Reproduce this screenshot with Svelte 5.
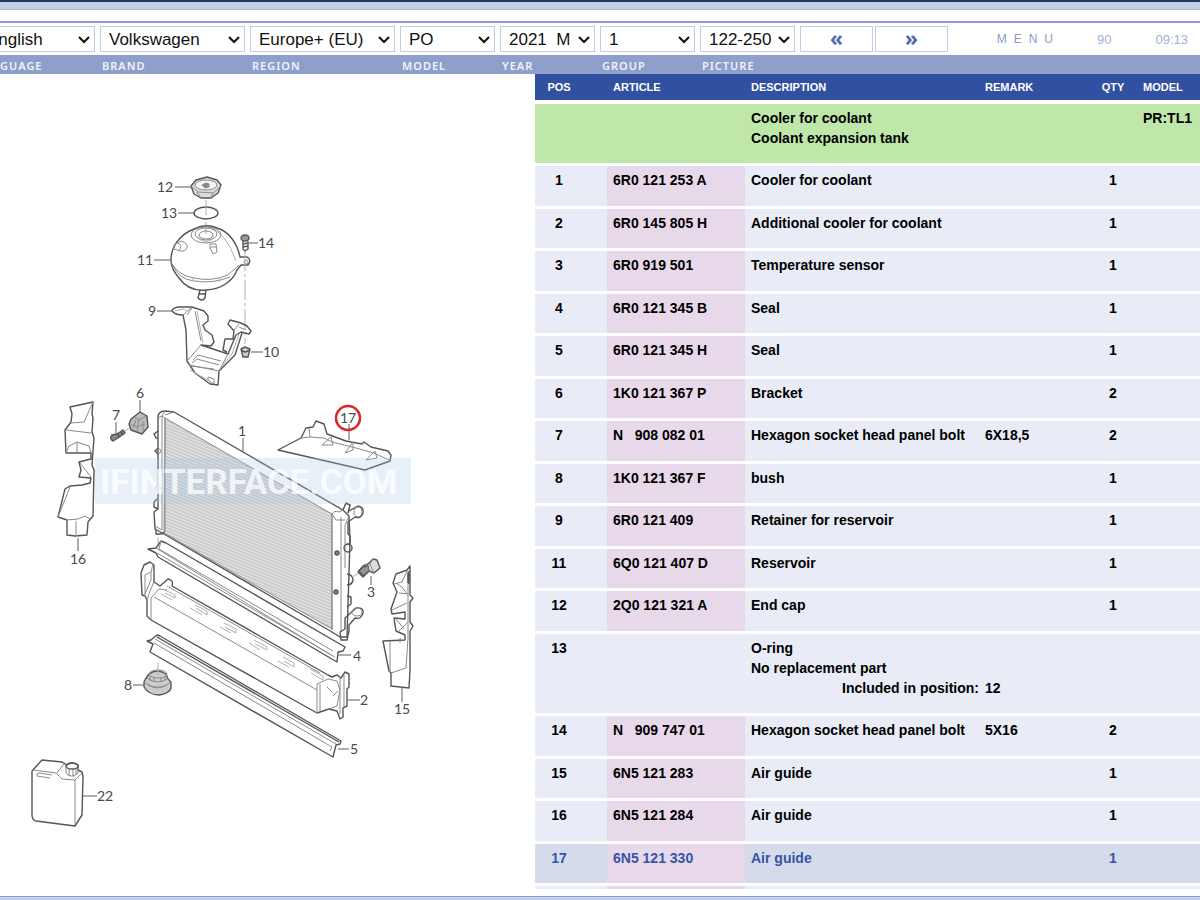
<script lang="ts">
    type Part = {
        pos: string;
        article: string;
        lines: string[];
        included?: string;
        remark?: string;
        qty: string;
        model?: string;
        group?: boolean;
    };

    const filters = [
        { id: 'language', label: 'LANGUAGE', value: 'English' },
        { id: 'brand', label: 'BRAND', value: 'Volkswagen' },
        { id: 'region', label: 'REGION', value: 'Europe+ (EU)' },
        { id: 'model', label: 'MODEL', value: 'PO' },
        { id: 'year', label: 'YEAR', value: '2021\u00a0\u00a0M' },
        { id: 'group', label: 'GROUP', value: '1' },
        { id: 'picture', label: 'PICTURE', value: '122-250' },
    ];

    const parts: Part[] = [
        { pos: '', article: '', lines: ['Cooler for coolant', 'Coolant expansion tank'], qty: '', model: 'PR:TL1', group: true },
        { pos: '1', article: '6R0 121 253 A', lines: ['Cooler for coolant'], qty: '1' },
        { pos: '2', article: '6R0 145 805 H', lines: ['Additional cooler for coolant'], qty: '1' },
        { pos: '3', article: '6R0 919 501', lines: ['Temperature sensor'], qty: '1' },
        { pos: '4', article: '6R0 121 345 B', lines: ['Seal'], qty: '1' },
        { pos: '5', article: '6R0 121 345 H', lines: ['Seal'], qty: '1' },
        { pos: '6', article: '1K0 121 367 P', lines: ['Bracket'], qty: '2' },
        { pos: '7', article: 'N   908 082 01', lines: ['Hexagon socket head panel bolt'], remark: '6X18,5', qty: '2' },
        { pos: '8', article: '1K0 121 367 F', lines: ['bush'], qty: '1' },
        { pos: '9', article: '6R0 121 409', lines: ['Retainer for reservoir'], qty: '1' },
        { pos: '11', article: '6Q0 121 407 D', lines: ['Reservoir'], qty: '1' },
        { pos: '12', article: '2Q0 121 321 A', lines: ['End cap'], qty: '1' },
        { pos: '13', article: '', lines: ['O-ring', 'No replacement part'], included: 'Included in position:', remark: '\n\n12', qty: '' },
        { pos: '14', article: 'N   909 747 01', lines: ['Hexagon socket head panel bolt'], remark: '5X16', qty: '2' },
        { pos: '15', article: '6N5 121 283', lines: ['Air guide'], qty: '1' },
        { pos: '16', article: '6N5 121 284', lines: ['Air guide'], qty: '1' },
        { pos: '17', article: '6N5 121 330', lines: ['Air guide'], qty: '1' },
        { pos: '', article: '\u00a0', lines: [], qty: '' },
    ];

    // centre of each number and its leader line
    const callouts = [
        { n: '12', x: 165, y: 187, d: 'M175 187H191' },
        { n: '13', x: 169, y: 213, d: 'M178 213H194' },
        { n: '14', x: 266, y: 243, d: 'M249 243H258' },
        { n: '11', x: 145, y: 260, d: 'M154 260H171' },
        { n: '9', x: 152, y: 311, d: 'M157 311H172' },
        { n: '10', x: 271, y: 352, d: 'M251 352H263' },
        { n: '6', x: 140, y: 393, d: 'M140 400V412' },
        { n: '7', x: 116, y: 415, d: 'M116 422V434' },
        { n: '1', x: 242, y: 431, d: 'M243 438V451' },
        { n: '17', x: 348, y: 418, d: 'M349 424V440' },
        { n: '16', x: 78, y: 559, d: 'M78 538V551' },
        { n: '3', x: 371, y: 592, d: 'M371 576V585' },
        { n: '4', x: 357, y: 656, d: 'M337 655H351' },
        { n: '8', x: 128, y: 685, d: 'M133 685H144' },
        { n: '2', x: 364, y: 700, d: 'M348 700H360' },
        { n: '15', x: 402, y: 709, d: 'M402 688V702' },
        { n: '5', x: 354, y: 749, d: 'M338 749H349' },
        { n: '22', x: 105, y: 796, d: 'M83 796H97' },
    ];

    let selected = $state('17');
</script>

<div class="page">
    <div class="strip"></div>

    <header>
        {#each filters as filter}
            <div class="filter">
                <select id={filter.id}>
                    <option>{filter.value}</option>
                </select>
                <svg class="chevron" viewBox="0 0 12 8" aria-hidden="true">
                    <path d="M1 1L6 6L11 1" />
                </svg>
                <label for={filter.id}>{filter.label}</label>
            </div>
        {/each}
        <div class="tools">
            <div class="controls">
                <button class="step" aria-label="Previous picture">«</button>
                <button class="step" aria-label="Next picture">»</button>
                <div class="status">
                    <button class="menu">MENU</button>
                    <span>90</span>
                    <time>09:13</time>
                </div>
            </div>
            <div class="rest"></div>
        </div>
    </header>

    <main>
        <div class="drawing">
            <svg viewBox="0 74 535 815" role="img" aria-label="Cooler for coolant, coolant expansion tank">
                <defs>
                    <pattern id="fins" width="3" height="3" patternUnits="userSpaceOnUse" patternTransform="rotate(22)">
                        <rect width="3" height="3" fill="#e6e6e6" />
                        <path d="M0 1H3" stroke="#b0b0b0" />
                    </pattern>
                </defs>

                <g class="line">
                    <!-- cap and ring -->
                    <path class="heavy" d="M191 186L196 180L207 177L217 180L221 185L218 193L211 198H201L194 194Z" fill="#ddd" />
                    <path d="M191 186L198 192L213 193L221 186" />
                    <ellipse cx="206" cy="185" rx="11" ry="5" fill="#f4f4f4" />
                    <path d="M197 192L201 198M213 193L211 198M202 185L206 183L209 184V187L205 188Z" fill="#888" />
                    <ellipse class="heavy" cx="206" cy="213" rx="12" ry="6" />
                    <path class="thin" d="M206 200V215M206 222V234" />

                    <!-- expansion tank -->
                    <path class="heavy" d="M194 229C179 235 171 247 171 260C171 268 175 273 179 278C186 288 196 291 206 290C222 289 233 281 237 270L241 265H248Q252 260 247 257L240 257C237 242 228 231 217 228Q206 223 194 229Z" />
                    <path d="M171 262Q177 275 194 278Q211 282 228 275L239 265M173 265Q178 279 194 281Q212 284 230 277" />
                    <path class="thin" d="M193 278V281M219 278V282M211 228Q226 233 236 261" />
                    <ellipse cx="206" cy="235" rx="15" ry="8" />
                    <ellipse cx="206" cy="234" rx="11" ry="6" />
                    <ellipse cx="206" cy="235" rx="7" ry="4" />
                    <path class="thin" d="M199 235V239Q206 244 213 239V235" />
                    <path d="M174 245L181 241Q188 243 187 248Q184 253 177 250L174 249ZM178 243Q183 246 179 251" />
                    <path d="M210 244H216L217 252L213 254L210 248ZM211 247H216" />
                    <path class="heavy" d="M200 290L198 298Q202 302 205 298L206 290M199 294H205" />
                    <circle cx="246" cy="262" r="2" />

                    <!-- screw and nut -->
                    <ellipse class="heavy" cx="245" cy="238" rx="4" ry="3" fill="#999" />
                    <path class="heavy" d="M243 241V249L245 251L248 249V241M243 244L248 243M243 247L248 246" />
                    <path class="thin" d="M245 251V344" stroke-dasharray="20 3 3 3" />
                    <path class="heavy" d="M241 349L245 347L250 349L248 357H243ZM241 350L245 352L250 350" fill="#ccc" />

                    <!-- retainer -->
                    <path class="heavy" d="M172 311Q173 307 180 307L192 307L204 311L208 316V321L203 325L205 330L212 335L214 342L211 346L201 345L228 354L236 335L241 332L249 334L251 331L247 326L241 323L230 320L228 324L234 331L233 339H225L223 350L227 352" />
                    <path class="heavy" d="M172 311Q175 315 183 315L186 330L187 361L195 373L210 384L218 385L219 371L235 355L242 333" />
                    <path d="M183 315L192 307M187 361L201 345M189 365L219 371L228 354M192 308L187 315M195 311L201 341M193 360L198 355L221 361M192 363L197 359L219 365M191 366L214 369M208 377L214 379V384L208 380ZM239 327L246 330M234 330L239 324" />
                    <path class="thin" d="M197 311L203 343M190 370L211 382M175 311L183 309L187 311M221 367L232 354L239 334" />

                    <!-- air guide 16 -->
                    <path class="heavy" d="M93 402L70 407L72 414L71 422L65 430L66 453L91 453V459L79 462L81 470L79 477L91 478L90 483L82 485L70 486L65 489L58 517L67 520V535L75 536L87 535L88 522L93 516L94 470L92 465L94 438L92 432L93 418L92 414Z" />
                    <path d="M93 402L84 422L71 423M66 430L91 433M66 453L69 446L77 442L89 446L91 453M80 463L91 477M58 517L70 487M66 520L78 519L85 516L90 519M76 521V536M77 442V453" />

                    <!-- bracket 6, bolt 7 -->
                    <path class="heavy" d="M131 419L140 412L147 416L148 427L142 434L131 430L129 424Z" fill="#bbb" />
                    <path d="M134 417L139 420L146 416M139 420L137 432M131 424L137 427L145 424M143 421V431M136 420L133 428" />
                    <path class="heavy" d="M112 435Q109 439 113 441L118 438L125 433L123 430L117 434ZM118 434L119 437M121 432L123 435" fill="#888" />
                    <path class="thin" d="M125 431L130 428" />

                    <!-- radiator -->
                    <path class="heavy" d="M158 418Q158 411 165 411L174 412L343 510L349 516L350 540L347 637H340L332 632L164 534L155 529L154 512L158 509Z" />
                    <path d="M165 418L332 514V629L164 533Z" fill="url(#fins)" />
                    <path d="M158 418L162 416L165 418V532M162 416V530L155 526M165 411L162 416M165 415L174 412" />
                    <path d="M332 514Q334 510 339 512L343 510M332 514V630M341 517V631M332 514L336 520H345M349 516L345 525V568M343 510L346 503L350 505L348 513" />
                    <path class="heavy" d="M343 510L346 503L350 505L348 513M349 511L358 506Q364 507 363 513Q361 519 355 517L348 522V534L350 536V543L347 545" />
                    <ellipse cx="358" cy="512" rx="4" ry="5" />
                    <circle class="heavy" cx="348" cy="548" r="4" />
                    <circle class="heavy" cx="337" cy="553" r="2" fill="#888" />
                    <circle class="heavy" cx="336" cy="592" r="2" fill="#888" />
                    <path class="heavy" d="M347 574Q353 575 353 580Q352 585 347 585M347 596L351 597V604L347 607" />
                    <path class="heavy" d="M345 618L356 608Q364 607 363 613Q361 620 355 618L349 625V631L347 640H341L340 632L345 629Z" />
                    <ellipse cx="357" cy="612" rx="5" ry="4" />
                    <path class="heavy" d="M158 431L154 434L156 438H158M158 448L155 451L158 454M158 485L155 488L158 491M157 499L154 502V507L158 509M156 530V534H162L164 532" />
                    <circle cx="159" cy="451" r="2" />
                    <circle cx="159" cy="488" r="2" />
                    <path class="thin" d="M158 537V544" />

                    <!-- sensor 3 -->
                    <path class="heavy" d="M358 572L363 566L368 564L373 559L377 560L380 568L374 573L369 571L363 577Z" fill="#ddd" />
                    <path class="heavy" d="M359 571L363 567L368 566L369 571L363 576Z" fill="#999" />
                    <path d="M363 566L366 573M366 564L370 572M373 559L370 564L374 573" />
                    <path class="thin" d="M352 577L359 573" />

                    <!-- seal 4 -->
                    <path class="heavy" d="M148 549L156 548L161 541L166 543L345 647L343 651L338 652L337 662L158 557L156 553Z" />
                    <path d="M161 541L159 549L333 651M156 548L331 655M157 553L335 657" />

                    <!-- additional cooler 2 -->
                    <path class="heavy" d="M147 600L145 596L142 595L141 573L144 565L150 562L154 565V582L160 586L168 579Q174 580 172 586L328 675L332 677L337 675L341 678L345 672L349 674V687L347 689V706L343 708V717L340 719L337 711L329 709L317 713L151 620L147 616Z" />
                    <path d="M153 564L151 572L145 575V597M151 572V580L145 594M154 582L150 591L147 600M151 620V598L159 589L167 590M167 586L320 673M154 597L317 690M317 713V684L328 679L337 681L340 690L337 706L329 709M320 684V711M340 677V714M344 675V708M327 687L332 692M333 696L338 691" />
                    <path class="thin" d="M163 589L175 595V598L165 593M195 605L207 611V615L196 608M224 623L236 629V633L225 627M254 640L267 647V650L255 644M283 657L294 663V667L284 661M310 669L323 676V680L311 673" />
                    <path class="thin" d="M161 594L172 600M190 608L202 615M220 627L231 633M249 643L260 650M278 661L289 667" />

                    <!-- seal 5 -->
                    <path class="heavy" d="M147 641L151 640L157 635L160 636L341 741L340 744L336 745L333 757L150 652L153 644Z" />
                    <path class="heavy" d="M157 637L339 742" />
                    <path d="M155 639L336 744M154 643L332 747L330 751" />

                    <!-- bush 8 -->
                    <path class="heavy" d="M146 678L144 682V687Q149 695 159 695Q169 694 171 688V682L168 679L166 674Q157 668 149 674Z" fill="#ccc" />
                    <ellipse cx="158" cy="674" rx="9" ry="4" />
                    <path d="M147 678Q158 686 168 678M144 682Q157 694 171 682M147 684Q157 690 167 685M150 676V681M165 676V681M154 678V682M161 678V682" />
                    <path class="thin" d="M158 663V675" />

                    <!-- air guide 15 -->
                    <path class="heavy" d="M410 566L407 570L396 574L393 583L397 592L391 609L392 614L405 612V619L394 618L396 631L405 635V640L383 641L389 671L391 673V686L409 688L410 670V631L413 626L410 622V602L413 598L410 595Z" />
                    <path d="M408 571V638L406 668L391 673M394 584L402 582L407 571M396 583L402 587L407 594M399 593L408 594M392 610L407 603M396 619L404 629M398 632L408 622M390 641V672M400 643V638" />
                    <path class="heavy" d="M408 573V583M409 571V584" />

                    <!-- air guide 17 -->
                    <path class="heavy" d="M278 450L301 438L306 428L313 427L316 421L324 424L327 434L346 441L362 444L364 442L371 447L388 451L391 455L390 461L365 470Z" />
                    <path d="M301 438L310 437L324 438L332 442L356 448L374 453L389 460M310 437L309 428M322 445L331 437L333 445ZM345 453L353 442V450ZM366 460L375 451L377 458Z" />

                    <!-- canister 22 -->
                    <path class="heavy" d="M32 771L42 760L62 762L67 765Q72 761 78 765V770L82 772L83 776L82 815L75 826L36 821Q32 820 32 815Z" />
                    <path d="M33 770L56 773Q60 777 62 779L75 780L82 773M75 780V825M57 773L64 764" />
                    <path d="M66 765V773Q71 779 78 773V765M69 769V776M73 769V777M76 768V775M37 776Q36 773 39 773L52 775M37 776L50 778" />
                    <ellipse class="heavy" cx="72" cy="766" rx="6" ry="3" />
                </g>

                <rect x="95" y="458" width="316" height="46" fill="#a9c6e6" opacity=".28" />
                <text class="watermark" x="100" y="494">IFINTERFACE.COM</text>

                {#each callouts as c}
                    <path class="leader" d={c.d} />
                    <text class="number" x={c.x} y={c.y + 5}>{c.n}</text>
                    {#if c.n === selected}
                        <circle class="mark" cx={c.x} cy={c.y} r="12" />
                    {/if}
                {/each}
            </svg>
        </div>

        <div class="parts">
            <table>
                <thead>
                    <tr>
                        <th class="pos">POS</th>
                        <th class="article">ARTICLE</th>
                        <th class="description">DESCRIPTION</th>
                        <th class="remark">REMARK</th>
                        <th class="qty">QTY</th>
                        <th>MODEL</th>
                    </tr>
                </thead>
                <tbody>
                    {#each parts as part}
                        <tr class:group={part.group}
                            class:selected={part.pos === selected}
                            onclick={() => { if (part.pos) selected = part.pos; }}>
                            <td class="pos">{part.pos}</td>
                            <td class="article" class:filled={part.article}>{part.article}</td>
                            <td class="description">
                                {#each part.lines as line}
                                    <div>{line}</div>
                                {/each}
                                {#if part.included}
                                    <div class="included">{part.included}</div>
                                {/if}
                            </td>
                            <td class="remark">{part.remark ?? ''}</td>
                            <td class="qty">{part.qty}</td>
                            <td>{part.model ?? ''}</td>
                        </tr>
                    {/each}
                </tbody>
            </table>
        </div>
    </main>
</div>

<style>
    :global(body) {
        background: white;
        overflow: hidden;
    }

    .page {
        height: 100vh;
        box-sizing: border-box;
        display: flex;
        flex-direction: column;
        overflow: hidden;
        border-bottom: 3px solid #c3cfe2;
        font-family: "Liberation Sans", Arial, sans-serif;
    }

    .strip {
        flex: none;
        height: 7px;
        background: #c3d1e1;
        border-top: 2px solid #1f3a63;
        border-bottom: 1px solid #b0b4e0;
    }

    header {
        flex: none;
        display: grid;
        grid-template-columns: 127px 150px 150px 100px 100px 100px 100px 1fr;
        margin-top: 11px;
        margin-left: -27px;
        border-top: 2px solid #9197d6;
    }

    .filter,
    .tools {
        position: relative;
        display: flex;
        flex-direction: column;
        padding-top: 3px;
    }

    select {
        appearance: none;
        height: 26px;
        margin: 0 5px 3px 0;
        padding: 0 0 0 8px;
        border: 1px solid #c5cae6;
        border-radius: 0;
        background: white;
        color: #111;
        font-family: inherit;
        font-size: 17px;
    }

    .filter:first-child select {
        margin-left: 5px;
    }

    .chevron {
        position: absolute;
        top: 13px;
        right: 10px;
        width: 12px;
        height: 8px;
        pointer-events: none;
    }

    .chevron path {
        fill: none;
        stroke: #111;
        stroke-width: 2;
    }

    label,
    .rest {
        height: 19px;
        box-sizing: border-box;
        padding: 2px 0 0 2px;
        background: #8f9fcc;
        color: #f0f2fa;
        font: 600 11px/18px "Noto Sans", sans-serif;
        letter-spacing: 1px;
    }

    .controls {
        display: flex;
        align-items: center;
        gap: 2px;
        height: 26px;
        margin-bottom: 3px;
    }

    .step {
        width: 73px;
        height: 26px;
        padding: 0 0 3px;
        border: 1px solid #c5cae6;
        background: white;
        color: #5468a8;
        font: bold 21px/20px "Noto Sans", sans-serif;
    }

    .status {
        flex: 1;
        display: flex;
        justify-content: flex-end;
        align-items: center;
        gap: 44px;
        padding-right: 12px;
        color: #a3b0d4;
        font-size: 13px;
    }

    .menu {
        margin-right: -7px;
        padding: 0;
        border: 0;
        background: none;
        color: #8c9ac4;
        font: 12px "Liberation Sans", Arial, sans-serif;
        letter-spacing: 7px;
    }

    main {
        flex: 1;
        min-height: 0;
        display: flex;
        padding-bottom: 7px;
        border-bottom: 1px solid #9197d6;
    }

    .drawing {
        flex: 1;
        min-width: 0;
    }

    .drawing svg {
        display: block;
        width: 100%;
        height: 100%;
    }

    .line path,
    .line ellipse,
    .line circle {
        stroke: #8a8a8a;
        stroke-width: 1;
        stroke-linejoin: round;
    }

    .line :not([fill]) {
        fill: none;
    }

    .line .heavy {
        stroke: #555;
        stroke-width: 1.4;
    }

    .line .thin {
        stroke: #b0b0b0;
    }

    .leader {
        stroke: #777;
        stroke-width: 1.2;
    }

    .number {
        fill: #4a4a4a;
        font: 14px Lato, sans-serif;
        text-anchor: middle;
    }

    .watermark {
        fill: white;
        opacity: .75;
        font: bold 35px Roboto, sans-serif;
    }

    .mark {
        fill: none;
        stroke: #dc2626;
        stroke-width: 2.5;
    }

    .parts {
        flex: 0 0 665px;
        overflow: hidden;
    }

    table {
        width: 100%;
        table-layout: fixed;
        border-spacing: 0;
        font-size: 14px;
        font-weight: bold;
        line-height: 20px;
    }

    th {
        height: 26px;
        padding: 0 0 0 6px;
        background: #3250a0;
        border-bottom: 4px solid white;
        color: white;
        font-size: 11px;
        text-align: left;
    }

    td {
        padding: 4px 0 15px 6px;
        border-bottom: 3px solid white;
        background: #e9ecf6;
        background-clip: padding-box;
        vertical-align: top;
        white-space: pre;
    }

    tbody tr:nth-child(even) td {
        padding-bottom: 16px;
    }

    .pos {
        width: 48px;
        padding-left: 0;
        padding-right: 24px;
        text-align: center;
    }

    .article {
        width: 132px;
    }

    .description {
        width: 228px;
        white-space: normal;
    }

    .included {
        text-align: right;
    }

    .remark {
        width: 104px;
    }

    .qty {
        width: 48px;
        padding-left: 0;
        text-align: center;
    }

    .group td {
        background-color: #bfe7aa;
    }

    .selected td {
        background-color: #d5dbea;
        color: #3655a4;
    }

    td.filled {
        background-color: #e7d9e9;
    }
</style>
